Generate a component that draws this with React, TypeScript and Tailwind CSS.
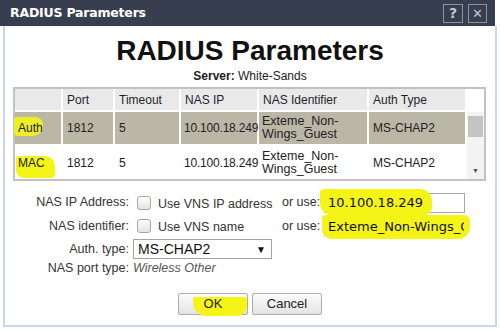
import { Fragment } from "react"

const hl = "absolute bg-[#f4f417] pointer-events-none"

const Checkbox = () => (
    <div className="w-[14px] h-[14px] rounded-[3px] border border-[#a6a6a6] bg-gradient-to-b from-[#fdfdfd] to-[#e4e4e4]" />
)

const rows = [
    { name: "Auth", bg: "bg-[#bab7a7]", h: "h-[32px]" },
    { name: "MAC", bg: "bg-white", h: "h-[33px]" },
]

export default function App() {
    return (
        <div className="w-[500px] h-[330px] bg-white overflow-hidden font-['Liberation_Sans',Arial,sans-serif] text-[#222]">
            <div className="w-[497px]">
                {/* title bar */}
                <div className="h-[26px] w-[495px] bg-[#373e4f] flex items-center justify-between pl-[10px] pr-[8px]">
                    <span className="text-white font-bold text-[12.5px] font-['DejaVu_Sans',sans-serif] tracking-[-0.2px]">RADIUS Parameters</span>
                    <div className="flex gap-[5px] mt-[1px]">
                        <div className="w-[20px] h-[19px] border border-[#8d939f] flex items-center justify-center text-[#c3c7cf] font-bold text-[14px] font-['DejaVu_Sans',sans-serif]">?</div>
                        <div className="w-[19px] h-[19px] border border-[#8d939f] flex items-center justify-center text-[#c3c7cf] font-bold text-[13px] font-['DejaVu_Sans',sans-serif]">✕</div>
                    </div>
                </div>

                {/* body */}
                <div className="ml-[3px] w-[494px] h-[301px] border-x-2 border-b-2 border-[#c9d7ee] flex flex-col">
                    <h1 className="mt-[9px] text-center text-[28px] leading-[32px] font-bold text-[#111]">RADIUS Parameters</h1>
                    <p className="mt-[2px] text-center text-[12px] leading-[14px]">
                        <span className="font-bold">Server:</span> White-Sands
                    </p>

                    {/* table */}
                    <div className="ml-[8px] mt-[4px] w-[473px] border-2 border-[#c2c2c2] bg-white grid grid-cols-[46px_50px_64px_76px_108px_96px_17px] gap-[2px] text-[12px] leading-[14px]">
                        {["", "Port", "Timeout", "NAS IP", "NAS Identifier", "Auth Type"].map((h, i) => (
                            <div key={i} className="h-[21px] bg-[#e9e9e9] flex items-center pl-[4px] text-[#1e1e2e]">{h}</div>
                        ))}
                        <div className="h-[21px] bg-white" />
                        {rows.map((r, ri) => (
                            <Fragment key={r.name}>
                                <div className={`${r.h} ${r.bg} relative flex items-center pl-[3px]`}>
                                    {ri === 0 ? (
                                        <span className={`${hl} left-[-1px] top-[5px] w-[29px] h-[19px] rounded-[3px_8px_10px_4px] opacity-90`} />
                                    ) : (
                                        <span className={`${hl} left-[1px] top-[10px] w-[39px] h-[22px] rounded-[2px_10px_4px_8px]`} />
                                    )}
                                    <span className="relative">{r.name}</span>
                                </div>
                                <div className={`${r.h} ${r.bg} flex items-center pl-[4px]`}>1812</div>
                                <div className={`${r.h} ${r.bg} flex items-center pl-[4px]`}>5</div>
                                <div className={`${r.h} ${r.bg} flex items-center pl-[3px] tracking-[-0.2px] whitespace-nowrap`}>10.100.18.249</div>
                                <div className={`${r.h} ${r.bg} flex items-center pl-[3px] text-[12.5px] leading-[13px]`}>Exteme_Non-<br />Wings_Guest</div>
                                <div className={`${r.h} ${r.bg} flex items-center pl-[4px]`}>MS-CHAP2</div>
                                {ri === 0 && (
                                    <div className="row-span-2 bg-[#f3f3f3] flex flex-col items-center justify-between py-[4px]">
                                        <span className="text-[7px] leading-[8px] text-[#b5b5b5]">▲</span>
                                        <div className="w-[15px] h-[21px] bg-[#c4c4c4] -mt-[8px]" />
                                        <div className="flex-1" />
                                        <span className="text-[7px] leading-[8px] text-[#505050]">▼</span>
                                    </div>
                                )}
                            </Fragment>
                        ))}
                    </div>

                    {/* form */}
                    <div className="mt-[10px] flex flex-col text-[12.5px] leading-[15px] text-[#333]">
                        <div className="h-[23px] flex items-center">
                            <span className="w-[124px] text-right">NAS IP Address:</span>
                            <div className="ml-[8px]"><Checkbox /></div>
                            <span className="ml-[7px] w-[124px] pt-[3px]">Use VNS IP address</span>
                            <span className="w-[42px]">or use:</span>
                            <div className="relative w-[141px] h-[20px] border border-[#a9a9a9] bg-white flex items-center pl-[3px] text-[13px] font-['DejaVu_Sans',sans-serif] text-[#111]">
                                <span className={`${hl} left-[-5px] top-[-5px] w-[112px] h-[26px] rounded-[4px_12px_8px_12px]`} />
                                <span className="relative">10.100.18.249</span>
                            </div>
                        </div>
                        <div className="h-[24px] flex items-center">
                            <span className="w-[124px] text-right">NAS identifier:</span>
                            <div className="ml-[8px]"><Checkbox /></div>
                            <span className="ml-[7px] w-[124px] pt-[3px]">Use VNS name</span>
                            <span className="w-[42px]">or use:</span>
                            <div className="relative w-[141px] h-[20px] border border-[#a9a9a9] bg-white flex items-center pl-[3px] text-[13px] font-['DejaVu_Sans',sans-serif] text-[#111] whitespace-nowrap">
                                <span className={`${hl} left-[-3px] top-[-2px] w-[148px] h-[24px] rounded-[4px_6px_12px_10px]`} />
                                <span className="relative overflow-hidden w-[136px]">Exteme_Non-Wings_Guest</span>
                            </div>
                        </div>
                        <div className="h-[22px] flex items-center">
                            <span className="w-[124px] text-right">Auth. type:</span>
                            <div className="ml-[4px] w-[139px] h-[20px] border border-[#a3a3a3] bg-white flex items-center justify-between pl-[4px] pr-[5px] text-[14px] text-[#111]">
                                <span>MS-CHAP2</span>
                                <span className="text-[10px]">▼</span>
                            </div>
                        </div>
                        <div className="h-[17px] flex items-center">
                            <span className="w-[124px] text-right">NAS port type:</span>
                            <span className="ml-[4px] italic text-[#555]">Wireless Other</span>
                        </div>
                    </div>

                    {/* buttons */}
                    <div className="mt-[16px] flex justify-center gap-[4px] text-[13px]">
                        <button className="relative w-[70px] h-[22px] rounded-[2px] border border-[#adadad] bg-gradient-to-b from-[#fbfbfb] to-[#e3e3e3] text-[#222]">
                            <span className={`${hl} left-[14px] top-[3px] w-[54px] h-[19px] rounded-[2px_3px_10px_14px]`} />
                            <span className="relative">OK</span>
                        </button>
                        <button className="w-[70px] h-[22px] rounded-[2px] border border-[#adadad] bg-gradient-to-b from-[#fbfbfb] to-[#e3e3e3] text-[#222]">Cancel</button>
                    </div>
                </div>
            </div>
        </div>
    )
}
